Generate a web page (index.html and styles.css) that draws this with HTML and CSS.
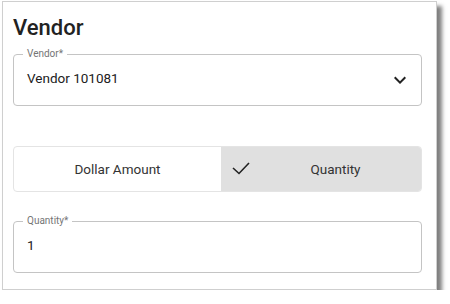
FILE: index.html
```html
<!DOCTYPE html>
<html lang="en">
<head>
    <meta charset="UTF-8">
    <meta name="viewport" content="width=device-width, initial-scale=1.0">
    <title>Vendor</title>
    <link rel="stylesheet" href="styles.css">
</head>
<body>
    <div class="panel">
        <h1>Vendor</h1>

        <!-- Vendor select -->
        <div class="field field-select">
            <span class="field-label">Vendor*</span>
            <span class="field-value">Vendor 101081</span>
            <svg class="chevron" width="24" height="24" viewBox="0 0 24 24">
                <path d="M16.59 8.59L12 13.17 7.41 8.59 6 10l6 6 6-6z"/>
            </svg>
        </div>

        <!-- Amount type toggle -->
        <div class="toggle-group">
            <div class="toggle">Dollar Amount</div>
            <div class="toggle toggle-checked">
                <svg class="check" width="18" height="14" viewBox="0 0 18 14">
                    <polyline points="1,6 7,11.5 17,1"/>
                </svg>
                <span class="toggle-text">Quantity</span>
            </div>
        </div>

        <!-- Quantity input -->
        <div class="field field-qty">
            <span class="field-label">Quantity*</span>
            <span class="field-value">1</span>
        </div>
    </div>
</body>
</html>
```

FILE: styles.css
```css
body {
    margin: 0;
    background-color: #fff;
    font-family: Roboto, "Liberation Sans", sans-serif;
    color: #212121;
}

.panel {
    box-sizing: border-box;
    width: 435px;
    height: 289px;
    margin: 1px 0 0 2px;
    padding: 12px 14px 0 10px;
    background-color: #fff;
    border: 1px solid #cfcfcf;
    box-shadow: 5px 5px 4px rgba(0,0,0,0.5);
}

h1 {
    margin: 0;
    font-size: 22px;
    line-height: 28px;
    font-weight: 500;
    color: #222;
}

/* Outlined form field */
.field {
    position: relative;
    box-sizing: border-box;
    height: 52px;
    display: flex;
    align-items: center;
    padding: 0 9px 0 13px;
    border: 1px solid #c4c4c4;
    border-radius: 4px;
}

.field-select {
    margin-top: 12px;
}

.field-qty {
    margin-top: 29px;
}

.field-label {
    position: absolute;
    top: -7px;
    left: 9px;
    padding: 0 4px;
    background-color: #fff;
    font-size: 10px;
    line-height: 12px;
    color: #757575;
}

.field-value {
    flex: 1;
    font-size: 13.5px;
    margin-bottom: 5px;
}

.chevron {
    fill: #222;
}

/* Button toggle group */
.toggle-group {
    display: grid;
    grid-template-columns: 207px 1fr;
    height: 46px;
    margin-top: 40px;
    border: 1px solid #e4e4e4;
    border-radius: 4px;
    overflow: hidden;
    box-sizing: border-box;
}

.toggle {
    display: flex;
    align-items: center;
    justify-content: center;
    font-size: 13.5px;
    color: #333;
}

.toggle-checked {
    justify-content: flex-start;
    padding-left: 11px;
    background-color: #e0e0e0;
}

.check {
    fill: none;
    stroke: #222;
    stroke-width: 1.6;
}

.toggle-text {
    flex: 1;
    text-align: center;
}
```
